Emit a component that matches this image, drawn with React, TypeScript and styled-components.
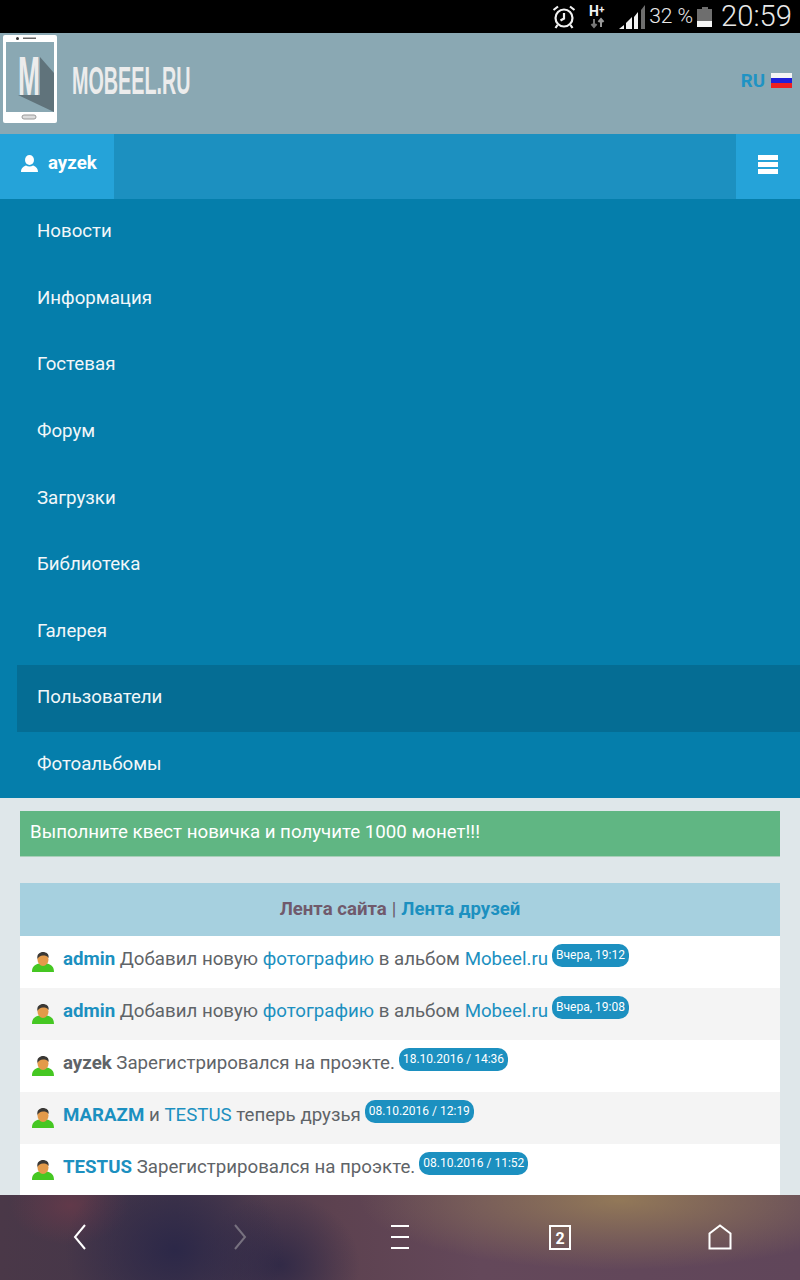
import styled, { createGlobalStyle } from 'styled-components'

const GlobalStyle = createGlobalStyle`
  html, body {
    margin: 0;
    padding: 0;
    background: #dfe7ea;
    font-family: Roboto, "Liberation Sans", sans-serif;
  }
`

// -- Layout --
const Page = styled.div`
  width: 800px;
  height: 1280px;
  display: flex;
  flex-direction: column;
  overflow: hidden;
`

// -- Status bar --
const StatusBar = styled.div`
  height: 33px;
  flex: none;
  background: #000;
  color: #e8e8e8;
  display: flex;
  align-items: center;
  justify-content: flex-end;
  padding-right: 8px;
`

const StatusIcon = styled.svg<{ $mr?: number }>`
  display: block;
  flex: none;
  margin-right: ${(p) => p.$mr ?? 0}px;
`

const Percent = styled.span`
  font-size: 21px;
  font-weight: 300;
  margin-right: 4px;
  line-height: 35px;
`

const Clock = styled.span`
  font-size: 29.2px;
  font-weight: 300;
  line-height: 35px;
  margin-left: 8px;
`

// -- Header --
const Header = styled.header`
  height: 101px;
  flex: none;
  background: #8aa8b3;
  display: flex;
  align-items: center;
  padding: 0 8px 0 3px;
`

const LogoText = styled.span`
  margin-left: 14px;
  margin-top: -4px;
  font-family: "Liberation Sans", sans-serif;
  font-size: 38px;
  font-weight: 700;
  color: #ececec;
  display: inline-block;
  white-space: nowrap;
  transform: scaleX(0.52);
  transform-origin: left center;
`

const Lang = styled.div`
  margin-left: auto;
  margin-top: -6px;
  display: flex;
  align-items: center;
  gap: 6px;
  color: #1f93c4;
  font-size: 18.7px;
  font-weight: 700;
`

// -- User bar --
const UserBar = styled.div`
  height: 65px;
  flex: none;
  background: #1c90c0;
  display: flex;
  justify-content: space-between;
`

const UserTab = styled.div`
  width: 114px;
  box-sizing: border-box;
  padding: 0 0 7px 21px;
  background: #25a3d9;
  color: #fff;
  display: flex;
  align-items: center;
  gap: 10px;
  font-size: 18.7px;
  font-weight: 700;
`

const BurgerTab = styled.div`
  width: 64px;
  background: #25a3d9;
  display: flex;
  align-items: center;
  justify-content: center;
  padding-bottom: 4px;
  box-sizing: border-box;
`

const Burger = styled.div`
  width: 20px;
  display: flex;
  flex-direction: column;
  gap: 2px;
`

const BurgerLine = styled.span`
  display: block;
  height: 5px;
  background: #fff;
`

// -- Menu --
const Menu = styled.nav`
  flex: none;
  height: 599px;
  background: #057eab;
  padding-left: 17px;
  display: flex;
  flex-direction: column;
`

const MenuItem = styled.a<{ $active?: boolean }>`
  flex: 1;
  display: flex;
  align-items: center;
  padding: 0 0 2px 20px;
  color: #f2f7f9;
  font-size: 18.7px;
  background: ${(p) => (p.$active ? '#056d94' : 'transparent')};
`

// -- Content --
const Main = styled.main`
  flex: 1;
  min-height: 0;
  overflow: hidden;
  padding: 13px 20px 0;
  background: #dfe7ea;
`

const Notice = styled.div`
  height: 46px;
  box-sizing: border-box;
  background: #60b683;
  border-bottom: 1px solid #a9cfb9;
  color: #fff;
  font-size: 18.7px;
  padding: 0 0 4px 10px;
  display: flex;
  align-items: center;
`

const Feed = styled.section`
  margin-top: 26px;
`

const FeedHead = styled.div`
  height: 53px;
  background: #a6d0df;
  display: flex;
  align-items: center;
  justify-content: center;
  gap: 5px;
  font-size: 18.6px;
  color: #6b5a6b;
  padding-bottom: 2px;
  box-sizing: border-box;
`

const HeadLink = styled.a<{ $current?: boolean }>`
  font-weight: 700;
  color: ${(p) => (p.$current ? '#705a6c' : '#1c90c0')};
`

const Row = styled.div<{ $alt?: boolean }>`
  height: 52px;
  box-sizing: border-box;
  padding: 9px 0 0 12px;
  background: ${(p) => (p.$alt ? '#f4f4f4' : '#fff')};
  display: flex;
  align-items: flex-start;
  font-size: 18.7px;
  line-height: 29px;
  color: #5f6468;
  white-space: pre;
`

const Avatar = styled.svg`
  flex: none;
  margin: 7px 9px 0 0;
`

const Name = styled.a`
  font-weight: 700;
  color: #1c90c0;
`

const Link = styled.a`
  color: #1c90c0;
`

const Strong = styled.b`
  font-weight: 700;
  color: #5f6468;
`

const Stamp = styled.span`
  display: inline-block;
  margin: -1px 0 0 4px;
  padding: 0 4px;
  height: 23px;
  line-height: 22px;
  border-radius: 10px;
  background: #1c90c0;
  color: #fff;
  font-size: 12px;
`

// -- Browser bar --
const BrowserBar = styled.div`
  height: 85px;
  flex: none;
  display: grid;
  grid-template-columns: repeat(5, 1fr);
  align-items: center;
  justify-items: center;
  padding-bottom: 2px;
  box-sizing: border-box;
  background:
    radial-gradient(ellipse 110px 90px at 175px 55px, rgba(44, 40, 72, 1), rgba(44, 40, 72, 0) 100%),
    radial-gradient(ellipse 80px 70px at 280px 70px, rgba(46, 40, 70, 0.9), rgba(46, 40, 70, 0) 100%),
    radial-gradient(ellipse 260px 70px at 620px 5px, rgba(146, 120, 88, 1), rgba(146, 120, 88, 0) 100%),
    radial-gradient(ellipse 60px 40px at 70px 10px, rgba(104, 58, 74, 0.8), rgba(104, 58, 74, 0) 100%),
    linear-gradient(90deg, #4a3848 0%, #43364a 22%, #5d4250 42%, #64485a 60%, #60465a 100%);
`

const NavIcon = styled.svg`
  display: block;
  flex: none;
`

const UserPic = () => (
  <Avatar width="22" height="20" viewBox="0 0 22 20">
    <path d="M0 20c0-5 2-7 7-8.500 2 1.500 6 1.500 8 0 5 1.500 7 3.500 7 8.500z" fill="#45c722" />
    <ellipse cx="11" cy="7.500" rx="5.500" ry="6.500" fill="#e39a4a" />
    <path d="M5.500 7C4.500 2 8 0 11 0s6.500 2 5.500 6c-1-2-3-2.500-5.500-2.500S6.500 5 5.500 7z" fill="#3a3835" />
  </Avatar>
)

const App = () => (
  <Page>
    <GlobalStyle />
    <StatusBar>
      <StatusIcon width="26" height="26" viewBox="0 0 26 26" fill="none" stroke="#f2f2f2" strokeWidth="2.2" $mr={12}>
        <circle cx="13" cy="14" r="8.500" />
        <path d="M13 9v5.500l-3.500 2M2.500 6 7 2.500M23.500 6 19 2.500M6.500 21l-2 3M19.500 21l2 3" />
      </StatusIcon>
      <StatusIcon width="20" height="28" viewBox="0 0 20 28" $mr={10}>
        <text x="0" y="13" fontFamily="Roboto" fontWeight="700" fontSize="14" fill="#f2f2f2">H</text>
        <text x="10" y="10" fontFamily="Roboto" fontWeight="700" fontSize="10" fill="#f2f2f2">+</text>
        <path d="M5 16v8M2.500 21 5 24l2.500-3" stroke="#777" strokeWidth="2" fill="none" />
        <path d="M12 24v-8M9.500 19l2.500-3 2.500 3" stroke="#999" strokeWidth="2" fill="none" />
      </StatusIcon>
      <StatusIcon width="26" height="24" viewBox="0 0 26 24" $mr={4}>
        <path d="M0 24h5v-4z" fill="#f2f2f2" />
        <path d="M7 24h6V12l-6 6z" fill="#f2f2f2" />
        <path d="M15 24h4V7l-4 5z" fill="#f2f2f2" />
        <path d="M22 24h4V0l-4 5z" fill="#6e6e6e" />
      </StatusIcon>
      <Percent>32 %</Percent>
      <StatusIcon width="16" height="20" viewBox="0 0 16 20">
        <path d="M5 0h6v2h4v18H0V2h5z" fill="#6e6e6e" />
        <path d="M0 14h15v6H0z" fill="#f5f5f5" />
      </StatusIcon>
      <Clock>20:59</Clock>
    </StatusBar>

    <Header>
      <svg width="55" height="88" viewBox="0 0 55 88" style={{ marginTop: -10 }}>
        <rect width="54" height="88" rx="2" fill="#fff" />
        <rect x="3" y="7" width="48" height="70" fill="#8aa8b3" />
        <circle cx="14.500" cy="3.500" r="1.500" fill="#333" />
        <rect x="20" y="2.500" width="13" height="1.500" fill="#666" />
        <rect x="19" y="80" width="14" height="4" rx="2" fill="#ddd" stroke="#999" />
        <path d="M37 22 51 38v39L15 60h22z" fill="#60737b" />
        <text
          transform="translate(15 60) scale(0.48 1)"
          fontFamily="'Liberation Sans', sans-serif"
          fontWeight="700"
          fontSize="55"
          fill="#ececec"
        >
          M
        </text>
      </svg>
      <LogoText>MOBEEL.RU</LogoText>
      <Lang>
        RU
        <svg width="21" height="15" viewBox="0 0 21 15">
          <rect width="21" height="5" fill="#f4f4f4" />
          <rect y="5" width="21" height="5" fill="#2121d8" />
          <rect y="10" width="21" height="5" fill="#ee2020" />
        </svg>
      </Lang>
    </Header>

    <UserBar>
      <UserTab>
        <svg width="17" height="17" viewBox="0 0 17 17" fill="#fff">
          <ellipse cx="8.500" cy="5" rx="4.500" ry="5" />
          <path d="M0 17c0-4 3-6 5-6.500 2 1.300 5 1.300 7 0 2 .5 5 2.500 5 6.500z" />
        </svg>
        ayzek
      </UserTab>
      <BurgerTab>
        <Burger>
          <BurgerLine />
          <BurgerLine />
          <BurgerLine />
        </Burger>
      </BurgerTab>
    </UserBar>

    <Menu>
      <MenuItem>Новости</MenuItem>
      <MenuItem>Информация</MenuItem>
      <MenuItem>Гостевая</MenuItem>
      <MenuItem>Форум</MenuItem>
      <MenuItem>Загрузки</MenuItem>
      <MenuItem>Библиотека</MenuItem>
      <MenuItem>Галерея</MenuItem>
      <MenuItem $active>Пользователи</MenuItem>
      <MenuItem>Фотоальбомы</MenuItem>
    </Menu>

    <Main>
      <Notice>Выполните квест новичка и получите 1000 монет!!!</Notice>
      <Feed>
        <FeedHead>
          <HeadLink $current>Лента сайта</HeadLink>|<HeadLink>Лента друзей</HeadLink>
        </FeedHead>
        <Row>
          <UserPic />
          <span>
            <Name>admin</Name> Добавил новую <Link>фотографию</Link> в альбом <Link>Mobeel.ru</Link>
          </span>
          <Stamp>Вчера, 19:12</Stamp>
        </Row>
        <Row $alt>
          <UserPic />
          <span>
            <Name>admin</Name> Добавил новую <Link>фотографию</Link> в альбом <Link>Mobeel.ru</Link>
          </span>
          <Stamp>Вчера, 19:08</Stamp>
        </Row>
        <Row>
          <UserPic />
          <span>
            <Strong>ayzek</Strong> Зарегистрировался на проэкте.
          </span>
          <Stamp>18.10.2016 / 14:36</Stamp>
        </Row>
        <Row $alt>
          <UserPic />
          <span>
            <Name>MARAZM</Name> и <Link>TESTUS</Link> теперь друзья
          </span>
          <Stamp>08.10.2016 / 12:19</Stamp>
        </Row>
        <Row>
          <UserPic />
          <span>
            <Name>TESTUS</Name> Зарегистрировался на проэкте.
          </span>
          <Stamp>08.10.2016 / 11:52</Stamp>
        </Row>
      </Feed>
    </Main>

    <BrowserBar>
      <NavIcon width="16" height="26" viewBox="0 0 16 26" fill="none" stroke="#fff" strokeWidth="2">
        <path d="M13 1 3 13l10 12" />
      </NavIcon>
      <NavIcon width="16" height="26" viewBox="0 0 16 26" fill="none" stroke="#77717f" strokeWidth="2">
        <path d="m3 1 10 12L3 25" />
      </NavIcon>
      <NavIcon width="20" height="26" viewBox="0 0 20 26" fill="none" stroke="#fff" strokeWidth="2">
        <path d="M1 2h18M1 13h18M1 24h18" />
      </NavIcon>
      <NavIcon width="24" height="26" viewBox="0 0 24 26" fill="none" stroke="#fff" strokeWidth="2">
        <rect x="2" y="2" width="20" height="23" />
        <text x="12" y="20" textAnchor="middle" fontFamily="Roboto" fontWeight="700" fontSize="16" fill="#fff" stroke="none">2</text>
      </NavIcon>
      <NavIcon width="24" height="26" viewBox="0 0 24 26" fill="none" stroke="#fff" strokeWidth="2">
        <path d="M1.500 24.500V9.500L12 1.500l10.500 8v15z" />
      </NavIcon>
    </BrowserBar>
  </Page>
)

export default App
